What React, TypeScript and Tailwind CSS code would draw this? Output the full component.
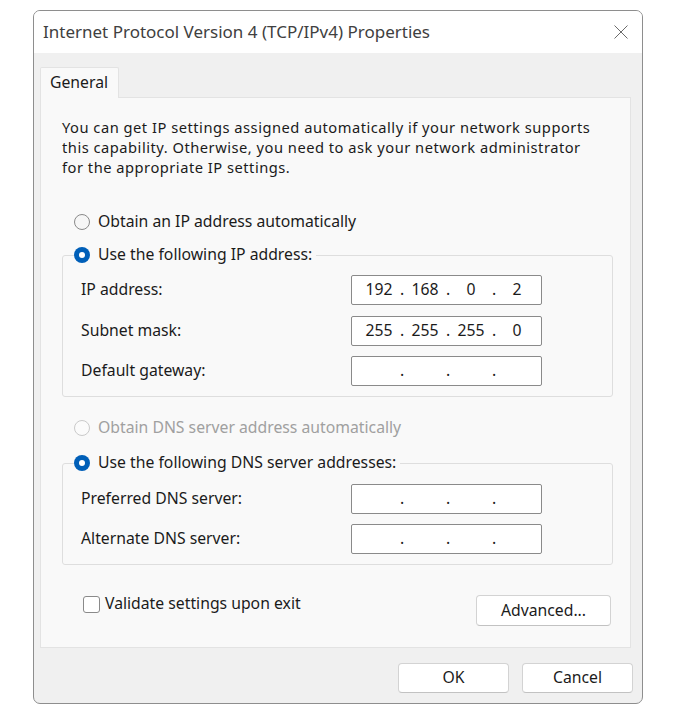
import React from "react";

function Radio({ checked, disabled }: { checked?: boolean; disabled?: boolean }) {
  if (checked) {
    return (
      <span className="w-[16px] h-[16px] rounded-full bg-[#005fb8] flex items-center justify-center shrink-0">
        <span className="w-[6px] h-[6px] rounded-full bg-white" />
      </span>
    );
  }
  return (
    <span
      className={
        disabled
          ? "w-[16px] h-[16px] rounded-full border border-[#cacaca] bg-[#fbfbfb] shrink-0"
          : "w-[16px] h-[16px] rounded-full border border-[#8a8a8a] bg-[#f6f6f6] shrink-0"
      }
    />
  );
}

function IpBox({ v }: { v: string[] }) {
  return (
    <div className="h-[30px] w-[191px] border border-[#8a8a8a] rounded-[2px] bg-white flex items-center pl-[6px] text-[#1b1b1b]">
      {v.map((s, i) => (
        <React.Fragment key={i}>
          <span className="w-[42px] text-center">{s}</span>
          {i < 3 && <span className="w-[4px] flex justify-center">.</span>}
        </React.Fragment>
      ))}
    </div>
  );
}

function Btn({ label, w, h }: { label: string; w: string; h: string }) {
  return (
    <button
      className={`${w} ${h} bg-white border border-[#d3d3d3] border-b-[#c2c2c2] rounded-[4px] flex items-center justify-center text-[#1b1b1b]`}
    >
      {label}
    </button>
  );
}

export default function App() {
  const empty = ["", "", "", ""];
  return (
    <div className="w-[681px] h-[725px] bg-white pt-[10px] pl-[33px] font-['Noto_Sans',sans-serif] text-[15.75px] text-[#1b1b1b]">
      <div className="w-[610px] h-[694px] border border-[#8e8e8e] rounded-[7px] bg-[#f0f0f0] overflow-hidden flex flex-col">
        {/* Title bar */}
        <div className="h-[42px] bg-white flex items-center justify-between pl-[9px] pr-[14px] shrink-0">
          <span className="text-[17px] text-[#404040]">Internet Protocol Version 4 (TCP/IPv4) Properties</span>
          <svg width="14" height="14" viewBox="0 0 14 14" className="shrink-0">
            <path d="M0.5 0.5 L13.5 13.5 M13.5 0.5 L0.5 13.5" stroke="#6b6b6b" strokeWidth="1" fill="none" />
          </svg>
        </div>

        {/* Tabs */}
        <div className="mt-[14px] ml-[6px] flex">
          <div className="relative z-10 -mb-px w-[79px] h-[31px] border border-b-0 border-[#e3e3e3] bg-[#f9f9f9] rounded-t-[2px] pl-[9px] flex items-center">
            General
          </div>
        </div>

        {/* Panel */}
        <div className="ml-[6px] w-[591px] h-[551px] border border-[#e3e3e3] bg-[#f9f9f9] flex flex-col shrink-0">
          <p className="mt-[19px] ml-[21px] text-[14.7px] tracking-[0.5px] leading-[20px] whitespace-nowrap">
            You can get IP settings assigned automatically if your network supports
            <br />
            this capability. Otherwise, you need to ask your network administrator
            <br />
            for the appropriate IP settings.
          </p>

          <div className="mt-[35px] ml-[33px] h-[20px] flex items-center gap-[8px]">
            <Radio />
            <span>Obtain an IP address automatically</span>
          </div>

          <div className="mt-[23px] ml-[21px] w-[551px] border border-[#dedede] rounded-[3px] pb-[10px]">
            <div className="-mt-[11px] ml-[11px] w-fit bg-[#f9f9f9] pr-[4px] h-[20px] flex items-center gap-[8px]">
              <Radio checked />
              <span>Use the following IP address:</span>
            </div>
            <div className="mt-[10px] pl-[18px] grid grid-cols-[270px_191px] gap-y-[10.5px] items-center">
              <span>IP address:</span>
              <IpBox v={["192", "168", "0", "2"]} />
              <span>Subnet mask:</span>
              <IpBox v={["255", "255", "255", "0"]} />
              <span>Default gateway:</span>
              <IpBox v={empty} />
            </div>
          </div>

          <div className="mt-[21px] ml-[33px] h-[20px] flex items-center gap-[8px] text-[#a0a0a0]">
            <Radio disabled />
            <span>Obtain DNS server address automatically</span>
          </div>

          <div className="mt-[25px] ml-[21px] w-[551px] border border-[#dedede] rounded-[3px] pb-[10px]">
            <div className="-mt-[11px] ml-[11px] w-fit bg-[#f9f9f9] pr-[4px] h-[20px] flex items-center gap-[8px]">
              <Radio checked />
              <span>Use the following DNS server addresses:</span>
            </div>
            <div className="mt-[11px] pl-[18px] grid grid-cols-[270px_191px] gap-y-[10px] items-center">
              <span>Preferred DNS server:</span>
              <IpBox v={empty} />
              <span>Alternate DNS server:</span>
              <IpBox v={empty} />
            </div>
          </div>

          <div className="mt-[30px] ml-[42px] w-[528px] flex justify-between items-start">
            <div className="h-[18px] flex items-center gap-[5px]">
              <span className="w-[17px] h-[17px] border border-[#8a8a8a] rounded-[3px] bg-white shrink-0" />
              <span>Validate settings upon exit</span>
            </div>
            <Btn label="Advanced..." w="w-[135px]" h="h-[31px]" />
          </div>
        </div>

        {/* Footer */}
        <div className="mt-[15px] flex justify-end gap-[13px] pr-[9px]">
          <Btn label="OK" w="w-[111px]" h="h-[30px]" />
          <Btn label="Cancel" w="w-[111px]" h="h-[30px]" />
        </div>
      </div>
    </div>
  );
}
